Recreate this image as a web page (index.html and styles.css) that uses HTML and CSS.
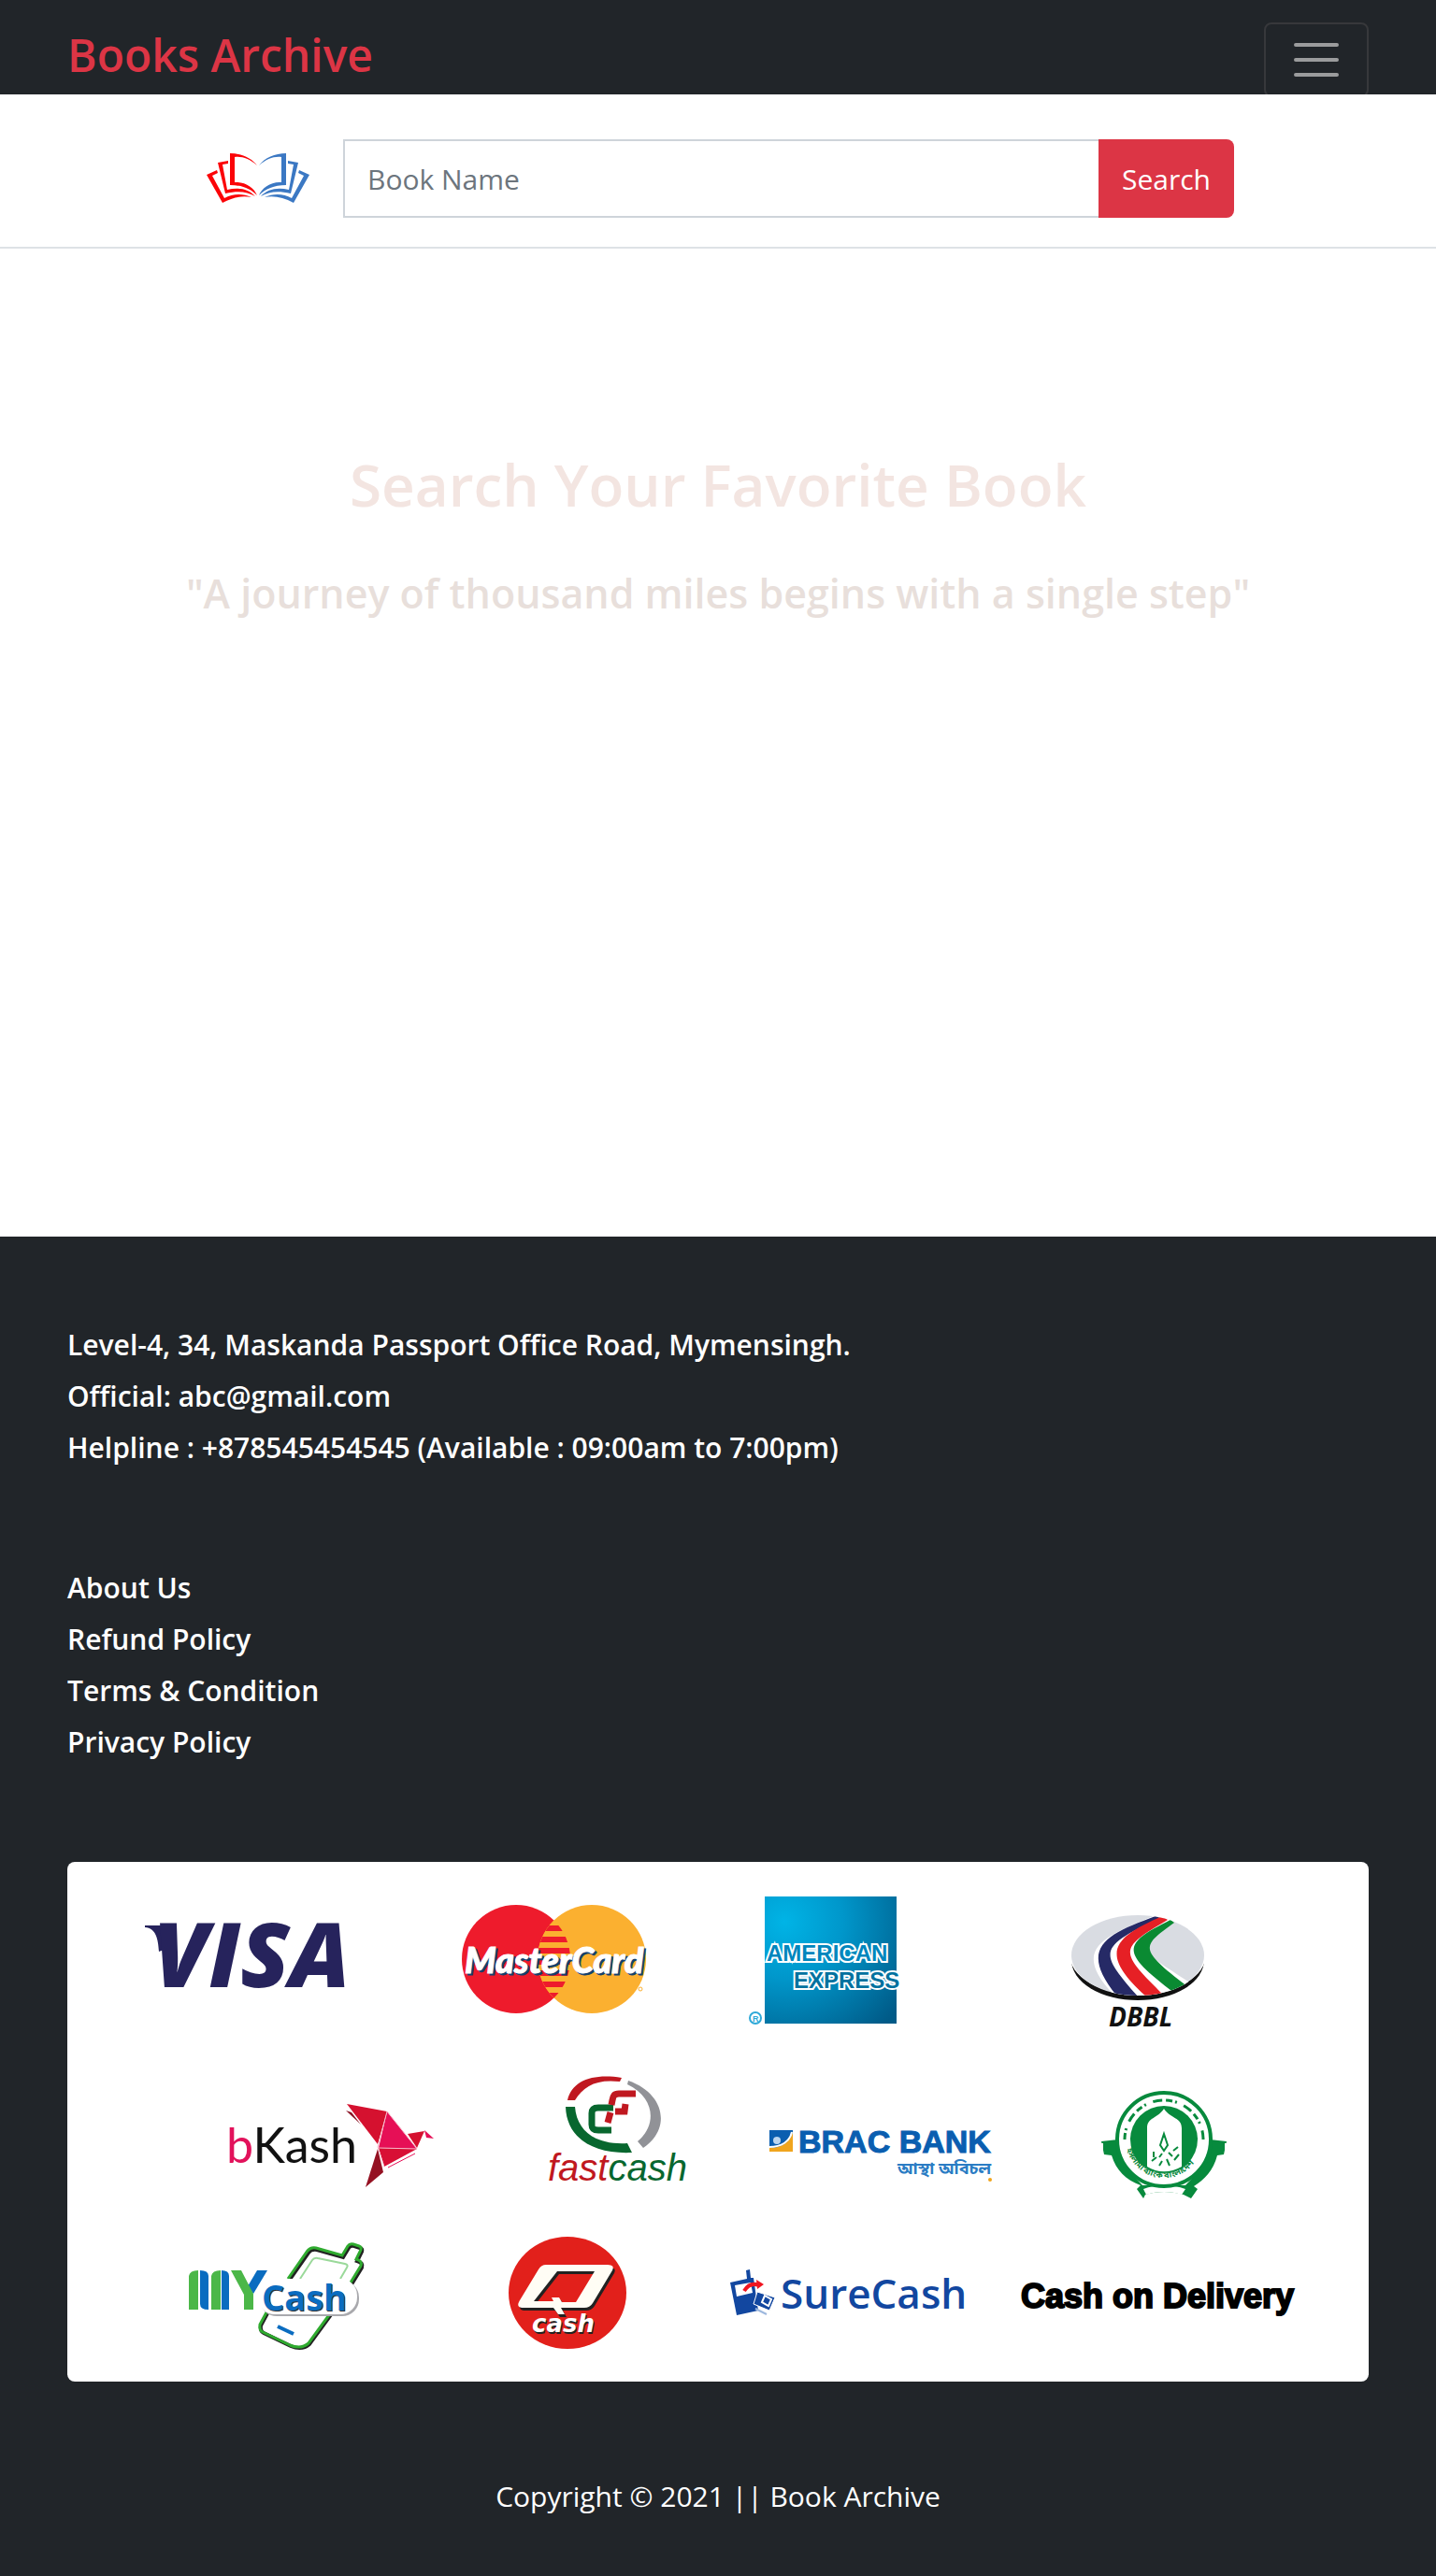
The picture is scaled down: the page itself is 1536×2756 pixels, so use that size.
FILE: index.html
```html
<!DOCTYPE html>
<html lang="en">
<head>
<meta charset="utf-8">
<meta name="viewport" content="width=device-width, initial-scale=1">
<title>Books Archive</title>
<link rel="stylesheet" href="styles.css">
</head>
<body>
<header class="navbar">
  <a class="brand" href="#">Books Archive</a>
  <button class="toggler" type="button" aria-label="Toggle navigation">
    <svg class="toggler-icon" viewBox="0 0 54 54" aria-hidden="true"><path d="M5 12H49M5 28H49M5 44H49"/></svg>
  </button>
</header>

<section class="search-bar">
  <svg class="logo" viewBox="0 0 110 54" role="img" aria-label="Books Archive logo">
    <g class="logo-red">
      <path d="M25 0C37 0 48 5 54 13C46 6 38 3 30 4V31C41 30 51 37 54 45C47 38 38 34 25 34Z"/>
      <path d="M12 10L23 8V11L17 12L22 39C34 36 45 38 52 46C43 41 34 40 20 43Z"/>
      <path d="M0 23L11 18L12 21L6 24L19 48C28 43 39 43 48 47C38 45 28 47 17 53Z"/>
    </g>
    <g class="logo-blue" transform="translate(110 0) scale(-1 1)">
      <path d="M25 0C37 0 48 5 54 13C46 6 38 3 30 4V31C41 30 51 37 54 45C47 38 38 34 25 34Z"/>
      <path d="M12 10L23 8V11L17 12L22 39C34 36 45 38 52 46C43 41 34 40 20 43Z"/>
      <path d="M0 23L11 18L12 21L6 24L19 48C28 43 39 43 48 47C38 45 28 47 17 53Z"/>
    </g>
  </svg>
  <form class="search-form">
    <input class="search-input" type="text" placeholder="Book Name" aria-label="Book Name">
    <button class="search-button" type="button">Search</button>
  </form>
</section>

<main class="hero">
  <h1 class="hero-title">Search Your Favorite Book</h1>
  <p class="hero-quote">"A journey of thousand miles begins with a single step"</p>
</main>

<footer class="footer">
  <address class="contact">
    <p>Level-4, 34, Maskanda Passport Office Road, Mymensingh.</p>
    <p>Official: abc@gmail.com</p>
    <p>Helpline : +878545454545 (Available : 09:00am to 7:00pm)</p>
  </address>
  <nav class="links">
    <a href="#">About Us</a>
    <a href="#">Refund Policy</a>
    <a href="#">Terms &amp; Condition</a>
    <a href="#">Privacy Policy</a>
  </nav>

  <svg class="payments" viewBox="0 0 1392 556" role="img" aria-label="Accepted payment methods">
    <defs>
      <radialGradient id="amexFill" cx="0.15" cy="0.2" r="1.1">
        <stop offset="0" stop-color="#00b4e6"/><stop offset="0.4" stop-color="#0097cb"/><stop offset="1" stop-color="#005a87"/>
      </radialGradient>
      <clipPath id="redDisc"><circle cx="480" cy="104" r="58"/></clipPath>
      <clipPath id="goldDisc"><circle cx="561" cy="104" r="58"/></clipPath>
      <clipPath id="dbblDisc"><ellipse cx="1145" cy="100" rx="72" ry="43"/></clipPath>
      <path id="ringText" d="M1132 297A41 41 0 0 0 1214 297"/>
      <path id="ringTop" d="M1131 297A42 42 0 0 1 1215 297"/>
    </defs>

    <!-- Visa -->
    <path d="M83 68H115L108 92L98 96C97 82 95 71 83 70Z" fill="#26235c"/>
    <text class="visa" x="92" y="134">VISA</text>

    <!-- MasterCard -->
    <circle cx="480" cy="104" r="58" fill="#ee1b2c"/>
    <circle cx="561" cy="104" r="58" fill="#fbb030"/>
    <g clip-path="url(#redDisc)"><g clip-path="url(#goldDisc)">
      <rect x="500" y="60" width="40" height="88" fill="#fbb030"/>
      <path d="M500 71H540M500 83H540M500 95H540M500 107H540M500 119H540M500 131H540M500 143H540" stroke="#ee1b2c" stroke-width="6"/>
    </g></g>
    <text class="mastercard" x="427" y="121" fill="#12406f" stroke="#12406f">MasterCard</text>
    <text class="mastercard" x="425" y="119" fill="#fff" stroke="#fff">MasterCard</text>
    <circle cx="613" cy="136" r="2" fill="none" stroke="#fbb030"/>

    <!-- American Express -->
    <rect x="746" y="37" width="141" height="136" fill="url(#amexFill)"/>
    <text class="amex" x="748" y="106" fill="#0086bd">AMERICAN</text>
    <text class="amex" x="777" y="135" fill="#00729f">EXPRESS</text>
    <circle cx="736" cy="167" r="6" fill="none" stroke="#2fa9d8" stroke-width="2"/>
    <text class="reg" x="733" y="171">R</text>

    <!-- DBBL -->
    <ellipse cx="1145" cy="105" rx="71" ry="43" fill="#111"/>
    <ellipse cx="1145" cy="99" rx="73" ry="43" fill="#fff"/>
    <ellipse cx="1145" cy="100" rx="71" ry="43" fill="#d9dce2"/>
    <g clip-path="url(#dbblDisc)">
      <path d="M1164 57C1110 80 1070 92 1122 145H1190L1202 130C1145 92 1140 96 1183 64Z" fill="#fff"/>
      <path d="M1164 58C1110 78 1080 92 1124 145H1146C1104 97 1100 92 1169 60Z" fill="#262a66"/>
      <path d="M1171 58C1122 80 1100 96 1154 144H1174C1126 96 1122 94 1177 62Z" fill="#e62025"/>
      <path d="M1180 62C1128 88 1126 96 1184 140L1198 133C1144 92 1150 90 1184 65Z" fill="#0a8a32"/>
    </g>
    <text class="dbbl" x="1114" y="176">DBBL</text>

    <!-- bKash -->
    <text class="bkash" x="170" y="322"><tspan fill="#e2125b">b</tspan>Kash</text>
    <path d="M299 259L342 267L332 302Z" fill="#d5112f"/>
    <path d="M298 266L304 268L314 281Z" fill="#8b1224"/>
    <path d="M342 267L374 307L333 306Z" fill="#e60f56"/>
    <path d="M333 306L374 307L339 326Z" fill="#d80f35"/>
    <path d="M332 307L338 332L319 348Z" fill="#951223"/>
    <path d="M364 291L382 288L374 306Z" fill="#d5112f"/>
    <path d="M382 287L392 296L384 295Z" fill="#e60f56"/>
    <path d="M342 267L332 305L339 326M333 306L374 307M342 267L374 307" fill="none" stroke="#f7b7c8"/>
    <path d="M343 327L372 312" stroke="#e60f56"/>

    <!-- fastcash -->
    <path d="M535 255C540 234 562 226 593 231L591 235C566 232 552 240 543 255Z" fill="#c01820"/>
    <path d="M533 262H543C545 288 565 303 599 301L604 311C562 313 534 295 533 262Z" fill="#08672f"/>
    <path d="M600 234C640 248 646 286 616 306L610 299C630 283 630 253 599 238Z" fill="#919297"/>
    <path d="M584 263H568C562 263 561 266 561 269V281C561 286 563 287 568 287H582" fill="none" stroke="#08672f" stroke-width="7"/>
    <path d="M608 248H590C585 248 584 250 583 255L582 260M597 259L596 267H586M581 268L578 279" fill="none" stroke="#c01820" stroke-width="7"/>
    <text class="fastcash" x="514" y="341" fill="#c01820">fast<tspan fill="#08672f">cash</tspan></text>

    <!-- BRAC Bank -->
    <rect x="751" y="287" width="25" height="23" fill="#0a5eb0"/>
    <path d="M776 289V310H751V306C764 306 773 300 776 289Z" fill="#f0a51e"/>
    <path d="M751 305C764 305 773 299 775 289" fill="none" stroke="#fff" stroke-width="2"/>
    <circle cx="759" cy="298" r="4" fill="#bcd6f0"/>
    <text class="brac" x="782" y="311">BRAC BANK</text>
    <text class="brac-tag" x="888" y="334">আস্থা অবিচল</text>
    <circle cx="987" cy="340" r="2" fill="#f0a51e"/>

    <!-- Islami Bank -->
    <path d="M1106 299L1124 297L1130 325L1150 346H1196L1216 325L1222 297L1240 299L1237 313L1230 314C1226 330 1216 340 1205 347L1209 350L1202 360L1194 356C1180 352 1166 352 1153 356L1151 360L1144 350L1148 346C1132 340 1122 330 1117 314L1109 313Z" fill="#078a3d"/>
    <path d="M1151 350C1164 345 1182 345 1196 350L1192 356C1180 352 1166 352 1154 356Z" fill="#fff"/>
    <circle cx="1173" cy="297" r="50" fill="#fff" stroke="#078a3d" stroke-width="4"/>
    <circle cx="1173" cy="297" r="36" fill="#078a3d"/>
    <path d="M1155 326V285C1155 273 1166 275 1173 264C1180 275 1192 273 1192 285V326C1180 333 1166 333 1155 326Z" fill="#fff"/>
    <path d="M1173 291L1177 303L1173 309L1169 303ZM1162 310V316M1183 309L1188 305M1160 320L1165 316M1184 319L1189 313M1168 325L1171 320M1179 325L1176 318M1171 312L1168 316M1178 311L1182 315" fill="none" stroke="#078a3d" stroke-width="2"/>
    <path d="M1107 301V308M1239 301V308" stroke="#fff" stroke-width="2"/>
    <text class="ring"><textPath href="#ringText" startOffset="10">ইসলামী ব্যাংক বাংলাদেশ</textPath></text>
    <use href="#ringTop" fill="none" stroke="#078a3d" stroke-width="3" stroke-dasharray="7 3 2 8 10 4"/>

    <!-- MYCash -->
    <path d="M236 446L257 416Q260 412 266 413L294 421L300 411Q302 408 306 409L312 411Q315 412 314 415L309 425Q316 427 314 432L303 450" fill="none" stroke="#222" stroke-width="4" transform="translate(1 2)"/>
    <path d="M236 446L257 416Q260 412 266 413L294 421L300 411Q302 408 306 409L312 411Q315 412 314 415L309 425Q316 427 314 432L303 450" fill="none" stroke="#2fab2f" stroke-width="3"/>
    <path d="M249 446L262 426Q264 423 268 424L297 430Q301 431 299 434L292 446" fill="none" stroke="#9ad99a" stroke-width="2"/>
    <path d="M213 482L206 495Q205 501 209 503L238 517Q250 522 258 515L282 482" fill="none" stroke="#222" stroke-width="4" transform="translate(1 1)"/>
    <path d="M213 482L206 495Q205 501 209 503L238 517Q250 522 258 515L282 482" fill="none" stroke="#2fab2f" stroke-width="3"/>
    <path d="M225 497L242 505" stroke="#0a6cc0" stroke-width="4"/>
    <rect x="206" y="448" width="106" height="38" rx="18" fill="#a9a9ad"/>
    <rect x="204" y="446" width="106" height="38" rx="18" fill="#fff"/>
    <path d="M130 479V443Q131 437 140 437V479ZM154 479V443Q155 437 164 437V479Z" fill="#4bb748"/>
    <path d="M142 437Q151 437 151 443V479Q142 479 142 473ZM165 437Q173 437 173 443V479H165Z" fill="#0a6cc0"/>
    <path d="M203 437H214L199 462L193 454Z" fill="#0a6cc0"/>
    <path d="M175 437H186L199 462V479H189V463Z" fill="#4bb748"/>
    <text class="mycash" x="209" y="481" fill="#333">Cash</text>
    <text class="mycash" x="208" y="480" fill="#0a6cc0">Cash</text>

    <!-- Q cash -->
    <ellipse cx="535" cy="461" rx="63" ry="60" fill="#e2201b"/>
    <path fill-rule="evenodd" transform="translate(2 3)" d="M512 431H578Q586 431 583 437L562 472Q559 477 553 477H528L532 484H525L520 477H488Q479 477 484 469L504 436Q507 431 512 431ZM524 438L499 470H520L518 466H526L529 471H544L564 438Z" fill="#222"/>
    <path fill-rule="evenodd" d="M512 431H578Q586 431 583 437L562 472Q559 477 553 477H528L532 484H525L520 477H488Q479 477 484 469L504 436Q507 431 512 431ZM524 438L499 470H520L518 466H526L529 471H544L564 438Z" fill="#fffdf5"/>
    <text class="qcash" x="498" y="505" fill="#222">cash</text>
    <text class="qcash" x="497" y="503" fill="#fff">cash</text>

    <!-- SureCash -->
    <path d="M709 450L727 446L726 437L730 436L731 445L734 445L739 480L716 485Z" fill="#1247a0"/>
    <path d="M714 453L731 450L733 461L716 465Z" fill="#fff"/>
    <path d="M724 459Q730 449 740 453" fill="none" stroke="#f01420" stroke-width="4"/>
    <path d="M737 447L745 452L738 457Z" fill="#f01420"/>
    <path d="M738 460L757 466L751 480L734 473Z" fill="#1247a0" stroke="#fff"/>
    <path d="M746 464L753 468L750 475L743 471Z" fill="none" stroke="#fff" stroke-width="2"/>
    <path d="M736 478L748 484" stroke="#9db8de" stroke-width="2"/>
    <text class="surecash" x="763" y="478">SureCash</text>

    <text class="cod" x="1020" y="477">Cash on Delivery</text>
  </svg>

  <p class="copyright">Copyright © 2021 || Book Archive</p>
</footer>
</body>
</html>
```
FILE: styles.css
```css
* { box-sizing: border-box; }
body {
  margin: 0;
  background: #fff;
  color: #212529;
  font-family: "Open Sans", "Noto Sans", sans-serif;
  font-size: 30px;
  line-height: 55px;
}
p, h1 { margin: 0; }
a { color: inherit; text-decoration: none; }

.navbar {
  display: flex;
  justify-content: space-between;
  align-items: flex-start;
  height: 101px;
  padding: 24px 72px 0;
  overflow: hidden;
  background: #212529;
}
.brand { font-size: 48px; font-weight: 600; line-height: 70px; color: #dc3545; }
.toggler {
  display: flex;
  justify-content: center;
  width: 112px;
  height: 80px;
  padding: 10px 0;
  border: 2px solid #37383b;
  border-radius: 8px;
  background: none;
}
.toggler-icon { width: 54px; height: 54px; }
.toggler-icon path { fill: none; stroke: #9b9c9d; stroke-width: 4; stroke-linecap: round; }

.search-bar {
  display: flex;
  justify-content: center;
  align-items: flex-start;
  gap: 36px;
  padding: 48px 0 31px 5px;
  border-bottom: 2px solid #dee2e6;
}
.logo { flex: none; width: 110px; height: 54px; margin-top: 15px; }
.logo-red { fill: #fb0408; }
.logo-blue { fill: #3b78c3; }
.search-form { display: flex; flex: 0 1 953px; }
.search-input {
  flex: 1;
  min-width: 0;
  height: 84px;
  padding: 0 24px;
  border: 2px solid #ced4da;
  border-right: 0;
  border-radius: 0;
  background: #fff;
  font: inherit;
}
.search-input::placeholder { color: #6c757d; opacity: 1; }
.search-button {
  width: 145px;
  height: 84px;
  padding: 0;
  border: 0;
  border-radius: 0 8px 8px 0;
  background: #dc3545;
  color: #fff;
  font: inherit;
}

.hero { min-height: 1057px; padding-top: 212px; text-align: center; }
.hero-title { font-size: 62px; font-weight: 600; line-height: 80px; color: #f3e5e1; }
.hero-quote { margin-top: 50px; font-size: 43px; font-weight: 600; line-height: 54px; color: #e8dfdb; }

.footer { padding: 88px 72px 58px; background: #212529; color: #fff; }
.contact { font-style: normal; font-weight: 600; }
.links { display: flex; flex-direction: column; align-items: flex-start; margin-top: 95px; font-weight: 600; }
.payments {
  display: block;
  width: 100%;
  height: auto;
  margin-top: 101px;
  border-radius: 8px;
  background: #fff;
}
.copyright { margin-top: 95px; text-align: center; }

.visa { font: italic 800 96px "Open Sans", sans-serif; fill: #26235c; }
.mastercard { font: italic 900 38px Lato, sans-serif; stroke-width: 1; }
.amex { font: bold 24px "Liberation Sans", sans-serif; stroke: #fff; stroke-width: 4; paint-order: stroke; }
.reg { font: bold 9px "Liberation Sans", sans-serif; fill: #2fa9d8; }
.dbbl { font: italic bold 28px "Open Sans", sans-serif; fill: #111; }
.bkash { font: 52px Lato, sans-serif; fill: #111; }
.fastcash { font: italic 40px "Liberation Sans", sans-serif; stroke: none; }
.brac { font: bold 34px "Liberation Sans", sans-serif; fill: #0a5eb0; stroke: #0a5eb0; stroke-width: 1; }
.brac-tag { font: bold 18px "Noto Sans Bengali", "Noto Sans", sans-serif; fill: #2a7cc4; }
.ring { font: bold 9px "Noto Sans Bengali", "Noto Sans", sans-serif; fill: #078a3d; }
.mycash { font: bold 38px "Open Sans", sans-serif; }
.qcash { font: italic bold 26px "DejaVu Sans", sans-serif; }
.surecash { font: 600 44px "Open Sans", sans-serif; fill: #1247a0; }
.cod { font: bold 36px "Liberation Sans", sans-serif; fill: #000; stroke: #000; stroke-width: 2; }
```
